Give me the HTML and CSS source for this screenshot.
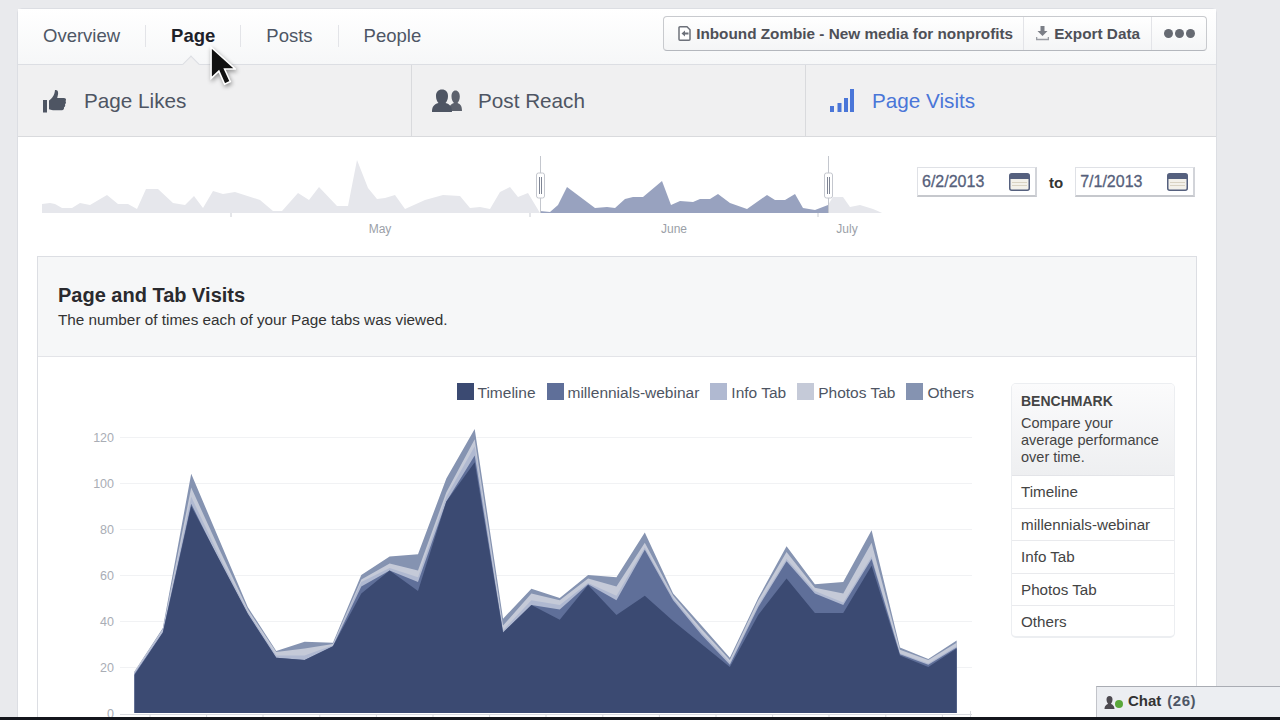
FILE: index.html
```html
<!DOCTYPE html>
<html lang="en">
<head>
  <meta charset="UTF-8" />
  <title>Page Insights - Visits</title>
  <link rel="stylesheet" href="styles.css">
</head>
<body>
  <div class="card">
    <header class="topbar">
      <nav class="topnav">
        <a class="topnav-item first">Overview</a>
        <a class="topnav-item active">Page</a>
        <a class="topnav-item">Posts</a>
        <a class="topnav-item">People</a>
      </nav>
      <div class="actions">
        <a class="action action-page">
          <svg width="13" height="15" viewBox="0 0 13 15"><path d="M2 .8h7l3 3v9.4a1 1 0 0 1-1 1H2a1 1 0 0 1-1-1V1.800a1 1 0 0 1 1-1z" fill="#fff" stroke="#6d717a" stroke-width="1.500"/><path d="M3.500 7.500L7 4.500v2h3.500v2H7v2z" fill="#6d717a"/></svg>
          Inbound Zombie - New media for nonprofits
        </a>
        <a class="action action-export">
          <svg width="13" height="15" viewBox="0 0 13 15"><path d="M4.500 0h4v5h3l-5 5-5-5h3z" fill="#7b7f87"/><path d="M.5 11v2.500h12V11" fill="none" stroke="#9a9da4" stroke-width="1.600"/></svg>
          Export Data
        </a>
        <a class="action action-more"><i></i><i></i><i></i></a>
      </div>
    </header>

    <div class="tabs">
      <div class="tab">
        <svg width="24" height="24" viewBox="0 0 24 24"><path d="M1 11h4v12.500H1z" fill="#4e5563"/><path d="M7 11.500c3-2 5.500-5 6-10.500 2.500-.5 3.500 1.500 3 4.500l-.8 3.500H22c2 0 2.500 2 1.500 3 .8 1.200.5 2.500-.5 3.200.5 1.300 0 2.500-1 3 .3 1.500-.5 3-2 3H11c-2 0-2.500-1-4-1z" fill="#4e5563"/></svg>
        <span>Page Likes</span>
      </div>
      <div class="tab tab-friends">
        <svg width="30" height="24" viewBox="0 0 30 24"><path d="M17 22c0-4.500 1-6.500 5-8-1.500-1.500-2.500-3.500-2.500-6.500C19.500 4 21 1.500 23.500 1.500S27.800 4 27.800 7.500c0 3-1 5-2.300 6.500 3 1 4.500 3 4.500 8z" fill="#5c616c"/><path d="M0 23c0-5 1.500-7.500 6.500-9C5 12.500 4 10 4 7c0-4 2.300-6.500 6-6.500S16 3 16 7c0 3-1 5.500-2.500 7 5 1.500 6.500 4 6.500 9z" fill="#4e5563"/></svg>
        <span>Post Reach</span>
      </div>
      <div class="tab tab-active">
        <svg width="24" height="24" viewBox="0 0 24 24"><path d="M0 17h4v6H0zM7.500 14h4v9h-4zM14 9h4v14h-4zM20 0h4v23h-4z" fill="#4a76d8"/></svg>
        <span>Page Visits</span>
      </div>
    </div>

    <div class="content">
      <section class="range">
        <svg class="spark" width="862" height="90" viewBox="38 150 862 90">
          <polygon fill="#e6e7ec" points="42,213 42,204 50,203 55,204 62,208 72,208 80,203 90,205 107,195 118,204 128,204 137,209 146,189 158,189 173,203 185,205 194,196 203,208 213,191 223,194 235,192 260,200 273,211 282,211 298,193 309,200 319,187 337,206 348,206 357,160 368,188 377,199 385,198 395,195 405,209 425,200 443,195 460,196 470,208 480,207 490,209 500,192 510,187 518,197 528,193 537,208 540,213"/>
          <polygon fill="#e6e7ec" points="828,213 828,205 833,197 843,197 850,207 860,205 873,209 880,212 882,213"/>
          <polygon fill="#98a2bf" points="540,213 540,211 550,212 558,205 567,187 595,208 607,207 615,208 625,199 633,197 643,197 662,181 671,205 680,201 693,202 700,199 710,199 718,194 730,203 747,209 767,195 775,200 785,200 795,194 803,208 815,210 828,205 828,213"/>
          <path d="M231 213v4M530 213v4M818 213v4" stroke="#c9ccd3"/>
          <path d="M540.500 156v57M828.500 156v57" stroke="#c4c7ce"/>
          <rect class="spark-handle" x="536.500" y="173" width="8" height="25" rx="2"/>
          <rect class="spark-handle" x="824.500" y="173" width="8" height="25" rx="2"/>
          <path d="M539.500 177v17M541.500 177v17M827.500 177v17M829.500 177v17" stroke="#7f8594"/>
          <text class="spark-label" x="380" y="233" text-anchor="middle">May</text>
          <text class="spark-label" x="674" y="233" text-anchor="middle">June</text>
          <text class="spark-label" x="847" y="233" text-anchor="middle">July</text>
        </svg>
        <div class="dates">
          <div class="date-field">
            <span>6/2/2013</span>
            <svg width="21" height="18" viewBox="0 0 21 18"><rect x=".75" y=".75" width="19.500" height="16.500" rx="2" fill="#f3f1ea" stroke="#55607e" stroke-width="1.500"/><path d="M1 1h19v5H1z" fill="#55607e"/><path d="M3 9.500h15M3 12.500h15" stroke="#d9d3c3"/></svg>
          </div>
          <span class="dates-to">to</span>
          <div class="date-field">
            <span>7/1/2013</span>
            <svg width="21" height="18" viewBox="0 0 21 18"><rect x=".75" y=".75" width="19.500" height="16.500" rx="2" fill="#f3f1ea" stroke="#55607e" stroke-width="1.500"/><path d="M1 1h19v5H1z" fill="#55607e"/><path d="M3 9.500h15M3 12.500h15" stroke="#d9d3c3"/></svg>
          </div>
        </div>
      </section>

      <section class="panel">
        <div class="panel-head">
          <h2>Page and Tab Visits</h2>
          <p>The number of times each of your Page tabs was viewed.</p>
        </div>
        <div class="panel-body">
          <div class="chart-col">
            <div class="legend">
              <span class="legend-item"><i class="swatch s-timeline"></i>Timeline</span>
              <span class="legend-item"><i class="swatch s-webinar"></i>millennials-webinar</span>
              <span class="legend-item"><i class="swatch s-info"></i>Info Tab</span>
              <span class="legend-item"><i class="swatch s-photos"></i>Photos Tab</span>
              <span class="legend-item"><i class="swatch s-others"></i>Others</span>
            </div>
            <svg class="chart" width="936" height="295" viewBox="38 425 936 295">
              <path class="grid" d="M120 437.500H972M120 483.500H972M120 529.500H972M120 575.500H972M120 621.500H972M120 667.500H972"/>
              <g class="axis-labels">
                <text x="114" y="442">120</text>
                <text x="114" y="488">100</text>
                <text x="114" y="534">80</text>
                <text x="114" y="580">60</text>
                <text x="114" y="626">40</text>
                <text x="114" y="672">20</text>
                <text x="114" y="718">0</text>
              </g>
              <!-- x = day index, y = visits -->
              <g transform="translate(134.500 713) scale(28.350 -2.300)">
                <polygon fill="#8593b1" points="0,0 0,18 1,37 2,104 3,75 4,46 5,27 6,31 7,30.500 8,60 9,68 10,69 11,102 12,123.500 13,41 14,54 15,50 16,60 17,59 18,78.500 19,52 20,38 21,24 22,50 23,72.500 24,56 25,57 26,79.500 27,28.500 28,23.500 29,31.500 29,0"/>
                <polygon fill="#c5cad8" points="0,0 0,18 1,36.500 2,98 3,71 4,45 5,26.500 6,28 7,30 8,58 9,65 10,62 11,96 12,119 13,38 14,52 15,49 16,58.500 17,55 18,74 19,51 20,36.500 21,23 22,49 23,70 24,54.500 25,52 26,74 27,27.500 28,23 29,30.500 29,0"/>
                <polygon fill="#b0b9d1" points="0,0 0,17.500 1,36 2,94 3,68 4,44 5,25 6,25 7,29.500 8,57 9,63 10,59 11,94 12,116 13,36 14,49 15,47 16,56.500 17,51 18,72 19,50 20,35 21,22 22,47 23,67 24,53 25,48 26,68 27,26 28,21.500 29,29 29,0"/>
                <polygon fill="#5f6f99" points="0,0 0,17 1,35 2,91 3,66 4,43 5,24 6,23 7,29 8,55 9,62 10,57 11,92 12,112 13,35 14,47 15,45 16,56 17,49 18,71 19,49 20,34 21,21 22,46 23,66 24,52 25,47 26,67 27,25.500 28,21 29,28.500 29,0"/>
                <polygon fill="#3b4a72" points="0,0 0,16.500 1,35 2,90 3,66.500 4,43 5,24 6,23 7,29 8,52 9,62 10,53 11,92 12,109 13,35 14,47 15,40.500 16,55.600 17,42.600 18,51 19,40 20,30 21,20 22,42.600 23,58.500 24,43.500 25,43.500 26,64 27,25 28,20 29,28 29,0"/>
              </g>
              <path class="axis" d="M120 714.500H972M150 714v4M206.600 714v4M263 714v4M319.800 714v4M376.400 714v4M433 714v4M489.600 714v4M546 714v4M602.800 714v4M659.400 714v4M716 714v4M772.600 714v4M829 714v4M885.800 714v4M942.400 714v4M970.500 711v7"/>
            </svg>
          </div>
          <aside class="benchmark">
            <div class="benchmark-head">
              <h3>BENCHMARK</h3>
              <p>Compare your average performance over time.</p>
            </div>
            <ul>
              <li>Timeline</li>
              <li>millennials-webinar</li>
              <li>Info Tab</li>
              <li>Photos Tab</li>
              <li>Others</li>
            </ul>
          </aside>
        </div>
      </section>
    </div>
  </div>

  <svg class="cursor" width="27" height="44" viewBox="0 0 26 42"><path d="M2 2v30l7.500-7 5.500 12.500 5.500-2.500-5.500-12h10.500z" fill="#111" stroke="#fff" stroke-width="1.500"/></svg>

  <div class="chat">
    <svg width="24" height="16" viewBox="0 0 24 16"><path d="M5.500 1c2 0 3 1.500 3 3.500 0 1.500-.5 3-1.500 4 .1.800 3.500 1.500 3.500 5.500H.500c0-4 3.400-4.700 3.500-5.500-1-1-1.500-2.500-1.500-4C2.500 2.500 3.500 1 5.500 1z" fill="#4d4a50"/><circle cx="15" cy="9" r="4" fill="#5aa83a"/></svg>
    <b>Chat</b><b class="chat-count">(26)</b>
  </div>
  <div class="screen-edge"></div>
</body>
</html>
```

FILE: styles.css
```css
* {
  margin: 0;
  padding: 0;
  box-sizing: border-box;
}

html, body {
  height: 720px;
  overflow: hidden;
}

body {
  background: #e9eaed;
  font-family: "Liberation Sans", Arial, sans-serif;
  color: #333;
  padding: 8px 63px 0 17px;
}

.card {
  background: #fff;
  border: 1px solid #dcdee3;
  border-radius: 5px 5px 0 0;
}

/* top bar */
.topbar {
  height: 56px;
  display: flex;
  justify-content: space-between;
  padding: 7px 9px 0 0;
  background: linear-gradient(#fff, #f6f7f8);
  border-bottom: 1px solid #dcdee3;
}

.topnav {
  display: flex;
  align-items: flex-start;
  padding-top: 9px;
}

.topnav-item {
  position: relative;
  font-size: 18.500px;
  line-height: 22px;
  color: #4e5665;
  padding: 0 25px;
  border-left: 1px solid #e3e4e8;
}

.topnav-item.first {
  border-left: none;
}

.topnav-item.active {
  color: #1d2129;
  font-weight: bold;
}

.topnav-item.active::after {
  content: "";
  position: absolute;
  left: 50%;
  top: 33px;
  margin-left: -8px;
  width: 11px;
  height: 11px;
  background: #f0f0f1;
  border-left: 1px solid #dcdee3;
  border-top: 1px solid #dcdee3;
  transform: rotate(45deg);
}

.actions {
  display: flex;
  height: 35px;
  border: 1px solid #c8cace;
  border-bottom-color: #b4b7bd;
  border-radius: 4px;
  background: linear-gradient(#fff, #f4f5f6);
}

.action {
  display: flex;
  align-items: center;
  gap: 5px;
  font-size: 15.300px;
  font-weight: bold;
  color: #4e5057;
  padding: 0 10px 0 14px;
  border-left: 1px solid #e3e4e8;
  white-space: nowrap;
}

.action-page {
  border-left: none;
}

.action-export {
  padding: 0 11px 0 12px;
}

.action-more {
  gap: 2px;
  padding: 0 11px 0 12px;
}

.action-more i {
  width: 9px;
  height: 9px;
  border-radius: 50%;
  background: #666a72;
}

/* metric tabs */
.tabs {
  display: flex;
  height: 72px;
  background: #f0f0f1;
  border-bottom: 1px solid #d9dadd;
}

.tab {
  width: 394px;
  display: flex;
  align-items: center;
  gap: 18px;
  padding-left: 24px;
  font-size: 20.700px;
  color: #4e5563;
  border-right: 1px solid #d9dadd;
}

.tab-friends {
  padding-left: 20px;
  gap: 16px;
}

.tab-active {
  flex: 1;
  border-right: none;
  color: #4a76d8;
}

.tab svg {
  flex: none;
}

/* date range */
.content {
  padding: 0 19px;
}

.range {
  display: flex;
  padding-top: 13px;
  height: 119px;
}

.spark {
  flex: none;
  margin-left: 1px;
}

.spark-handle {
  fill: #fff;
  stroke: #c4c7ce;
}

.spark-label {
  font-size: 12px;
  fill: #9b9fa8;
}

.dates {
  display: flex;
  align-items: center;
  margin: 17px 0 0 17px;
  height: 30px;
}

.date-field {
  width: 120px;
  height: 30px;
  display: flex;
  align-items: center;
  justify-content: space-between;
  padding: 0 5px 0 4px;
  background: #fff;
  border: 1px solid #dfe1e6;
  border-bottom: 2px solid #c6c8cd;
  border-right: 2px solid #d2d4d9;
  font-size: 16px;
  color: #565f7b;
  -webkit-text-stroke: 0.3px #565f7b;
}

.dates-to {
  font-size: 15px;
  font-weight: bold;
  color: #333;
  margin: 0 12px;
}

/* chart panel */
.panel {
  border: 1px solid #dcdee3;
  border-bottom: none;
}

.panel-head {
  height: 100px;
  padding: 26px 20px 0;
  background: #f6f7f8;
  border-bottom: 1px solid #e3e4e8;
}

.panel-head h2 {
  font-size: 20px;
  line-height: 24px;
  font-weight: bold;
  color: #2a2a2e;
}

.panel-head p {
  margin-top: 4px;
  font-size: 15.300px;
  line-height: 18px;
  color: #333;
}

.panel-body {
  display: flex;
  padding-top: 26px;
  height: 363px;
}

.chart-col {
  width: 936px;
  flex: none;
}

.legend {
  display: flex;
  justify-content: flex-end;
  gap: 11px;
  height: 17px;
  margin-bottom: 25px;
}

.legend-item {
  display: flex;
  align-items: flex-start;
  gap: 4px;
  font-size: 15.500px;
  line-height: 19px;
  color: #4e5563;
  white-space: nowrap;
}

.swatch {
  width: 17px;
  height: 17px;
}

.s-timeline { background: #3b4a72; }
.s-webinar { background: #5f6f99; }
.s-info { background: #b0b9d1; }
.s-photos { background: #c5cad8; }
.s-others { background: #8593b1; }

.chart {
  display: block;
}

.grid {
  stroke: #f1f2f4;
  fill: none;
}

.axis {
  stroke: #d9dbe0;
  fill: none;
}

.axis-labels text {
  font-size: 12.500px;
  fill: #a9adb5;
  text-anchor: end;
}

.benchmark {
  width: 164px;
  height: 255px;
  margin-left: 37px;
  border: 1px solid #eceef1;
  border-bottom-width: 2px;
  border-radius: 5px;
  overflow: hidden;
}

.benchmark-head {
  height: 92px;
  padding: 9px 9px 0;
  background: linear-gradient(#fbfbfc, #eeeff1);
  border-bottom: 1px solid #e3e4e8;
}

.benchmark-head h3 {
  font-size: 14px;
  line-height: 17px;
  color: #444;
  margin-bottom: 5px;
}

.benchmark-head p {
  font-size: 14.500px;
  line-height: 17px;
  color: #444;
}

.benchmark ul {
  list-style: none;
}

.benchmark li {
  height: 32.500px;
  line-height: 32px;
  padding-left: 9px;
  font-size: 15.200px;
  color: #444;
  border-bottom: 1px solid #e9eaed;
}

.benchmark li:last-child {
  border-bottom: none;
}

/* things lying over the page */
.cursor {
  position: absolute;
  left: 209px;
  top: 45px;
  filter: drop-shadow(1px 2px 2px rgba(0,0,0,0.4));
}

.chat {
  position: absolute;
  right: 0;
  bottom: 3px;
  width: 184px;
  height: 31px;
  display: flex;
  align-items: center;
  gap: 6px;
  padding: 0 0 3px 7px;
  background: #eceef2;
  border-top: 1px solid #a9acb3;
  border-left: 1px solid #c2c4ca;
  font-size: 15px;
  color: #333;
}

.chat svg {
  margin: 5px -6px 0 0;
}

.chat-count {
  color: #4e5665;
  letter-spacing: 0.5px;
}

.screen-edge {
  position: absolute;
  left: 0;
  right: 0;
  bottom: 0;
  height: 3px;
  background: #14161c;
}
```
